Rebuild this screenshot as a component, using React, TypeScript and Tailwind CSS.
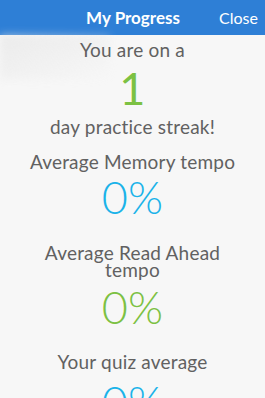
export default function App() {
  return (
    <div className="w-[265px] h-[398px] overflow-hidden relative bg-[#f7f7f7] font-['Lato',sans-serif]">
      {/* Header */}
      <div className="h-[35px] bg-[#2e7fd6] flex items-center relative">
        <div className="flex-1 text-center text-white font-bold text-[17px] pl-[1px]">My Progress</div>
        <div className="absolute right-[7px] top-0 h-full flex items-center text-white text-[16px]">Close</div>
      </div>

      {/* faint backdrop shape */}
      <div className="absolute left-0 top-[35px] w-[110px] h-[45px] bg-gradient-to-br from-[#e6e6e6] to-transparent opacity-70 blur-[4px]" />

      <div className="relative flex flex-col items-center text-[#616161] tracking-[0.2px]">
        <div className="mt-[3px] text-[19px] leading-[24px]">You are on a</div>
        <div className="text-[#7cc143] text-[45px] leading-[46px] mt-[3px]">1</div>
        <div className="text-[19px] leading-[24px] mt-[4px]">day practice streak!</div>
        <div className="text-[19px] leading-[24px] mt-[11px]">Average Memory tempo</div>
        <div className="text-[#1bb3e9] text-[45px] leading-[48px] font-light -mt-[1px]">0%</div>
        <div className="text-[19px] leading-[17px] mt-[23px] text-center">
          Average Read Ahead
          <br />
          tempo
        </div>
        <div className="text-[#7cc143] text-[45px] leading-[48px] font-light mt-[5px]">0%</div>
        <div className="text-[19px] leading-[24px] mt-[19px]">Your quiz average</div>
        <div className="text-[#1bb3e9] text-[45px] leading-[48px] font-light mt-[4px]">0%</div>
      </div>
    </div>
  );
}
